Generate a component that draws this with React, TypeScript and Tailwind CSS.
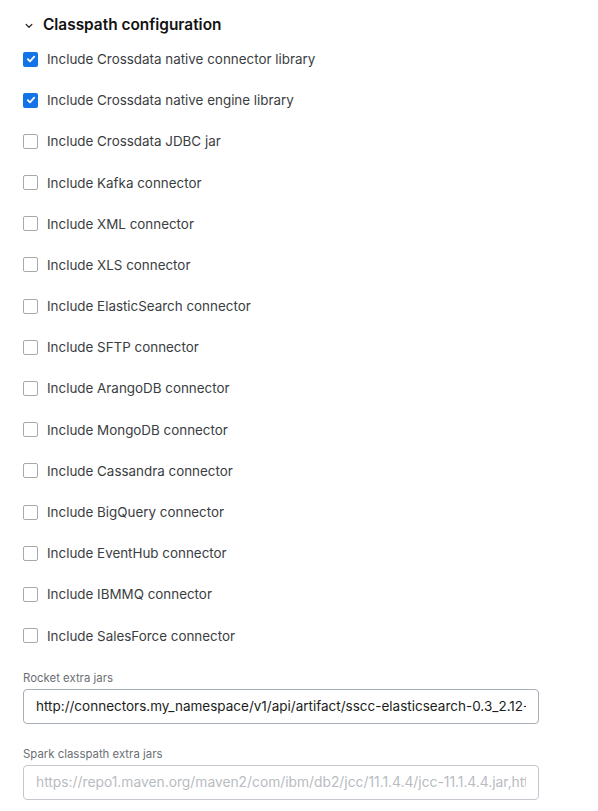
import { useState } from 'react';

const items = [
  { label: 'Include Crossdata native connector library', checked: true },
  { label: 'Include Crossdata native engine library', checked: true },
  { label: 'Include Crossdata JDBC jar', checked: false },
  { label: 'Include Kafka connector', checked: false },
  { label: 'Include XML connector', checked: false },
  { label: 'Include XLS connector', checked: false },
  { label: 'Include ElasticSearch connector', checked: false },
  { label: 'Include SFTP connector', checked: false },
  { label: 'Include ArangoDB connector', checked: false },
  { label: 'Include MongoDB connector', checked: false },
  { label: 'Include Cassandra connector', checked: false },
  { label: 'Include BigQuery connector', checked: false },
  { label: 'Include EventHub connector', checked: false },
  { label: 'Include IBMMQ connector', checked: false },
  { label: 'Include SalesForce connector', checked: false },
];

function Checkbox({ checked, onChange }: { checked: boolean; onChange: () => void }) {
  return (
    <button
      type="button"
      onClick={onChange}
      className={`w-[15px] h-[15px] shrink-0 rounded-[2px] flex items-center justify-center ${
        checked ? 'bg-[#1473e6]' : 'border border-[#a9a9a9] bg-white'
      }`}
    >
      {checked && (
        <svg width="10" height="10" viewBox="0 0 10 10" fill="none">
          <path d="M1.8 5.2 L4 7.3 L8.2 2.6" stroke="white" strokeWidth="1.8" strokeLinecap="round" strokeLinejoin="round" />
        </svg>
      )}
    </button>
  );
}

export default function App() {
  const [state, setState] = useState(items.map((i) => i.checked));

  return (
    <div className="bg-white min-h-screen text-[#2c2f33] pl-[23px] pr-[59px] pt-[14px]" style={{ fontFamily: 'Inter, "Noto Sans", sans-serif' }}>
      <div className="flex items-center h-[22px]">
        <svg width="8" height="6" viewBox="0 0 8 6" fill="none" className="ml-[2px] mt-[2px]">
          <path d="M1.2 1.5 L4 4.2 L6.8 1.5" stroke="#2c2f33" strokeWidth="1.3" strokeLinecap="round" strokeLinejoin="round" />
        </svg>
        <span className="ml-[10px] text-[15.4px] font-semibold text-[#111]">Classpath configuration</span>
      </div>

      <div className="mt-[14px] flex flex-col gap-[23.2px]">
        {items.map((item, i) => (
          <label key={item.label} className="flex items-center h-[18px] cursor-pointer">
            <Checkbox
              checked={state[i]}
              onChange={() => setState((s) => s.map((v, j) => (j === i ? !v : v)))}
            />
            <span className="ml-[9px] text-[13.4px] text-[#3a3d42]">{item.label}</span>
          </label>
        ))}
      </div>

      <div className="mt-[25px]">
        <div className="text-[11.4px] text-[#6b6f75] h-[16px] leading-[16px]">Rocket extra jars</div>
        <input
          readOnly
          value="http://connectors.my_namespace/v1/api/artifact/sscc-elasticsearch-0.3_2.12-1.0.0.jar"
          className="mt-[3px] w-full h-[35px] border border-[#a7adb5] rounded-[4px] px-[12px] text-[13.5px] text-[#1b1d20] outline-none"
        />
      </div>

      <div className="mt-[22px]">
        <div className="text-[11.4px] text-[#6b6f75] h-[16px] leading-[16px]">Spark classpath extra jars</div>
        <input
          readOnly
          placeholder="https://repo1.maven.org/maven2/com/ibm/db2/jcc/11.1.4.4/jcc-11.1.4.4.jar,https://repo1.maven.org"
          className="mt-[3px] w-full h-[35px] border border-[#c3c8ce] rounded-[4px] px-[12px] text-[13.8px] text-[#1b1d20] placeholder:text-[#b8bcc2] outline-none"
        />
      </div>
    </div>
  );
}
